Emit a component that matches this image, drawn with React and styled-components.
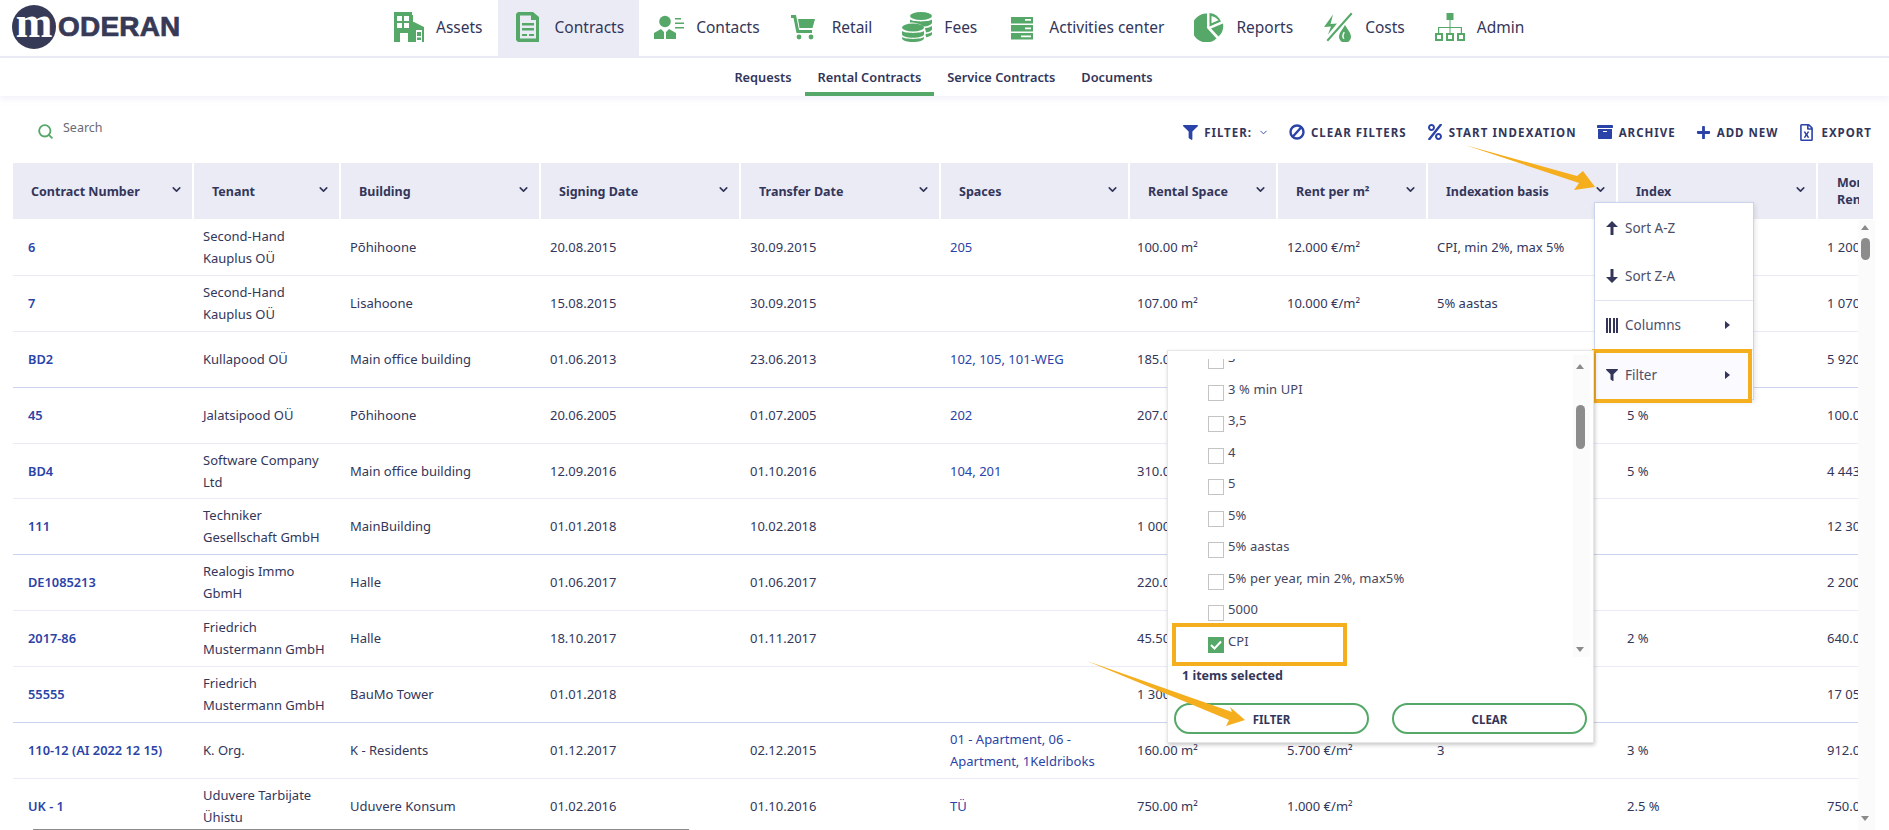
import React from "react";
import styled, { createGlobalStyle } from "styled-components";
import {
  FaArchive,
  FaFilter,
  FaPercent,
  FaPlus,
  FaRegFileExcel,
} from "react-icons/fa";
import { FiChevronDown, FiSearch } from "react-icons/fi";

const GREEN = "#55a868";
const INK = "#33365a";
const BLUE = "#2b43a8";
const ORANGE = "#f5ae1e";
const COLUMNS = "179px 145px 198px 198px 198px 187px 146px 148px 188px 198px 200px";

const GlobalStyle = createGlobalStyle`
  html, body {
    margin: 0;
    height: 830px;
    overflow: hidden;
    background: #fff;
    font-family: "Noto Sans", "Open Sans", sans-serif;
    color: ${INK};
  }
  * { box-sizing: border-box; }
`;

const Page = styled.div`
  position: relative;
  width: 1889px;
  height: 830px;
  overflow: hidden;
`;

const Header = styled.header`
  display: flex;
  height: 58px;
  padding-left: 12px;
  border-bottom: 2px solid #ebebf5;
`;

const Logo = styled.div`
  display: flex;
  align-items: center;
  width: 367px;
  height: 54px;
`;

const LogoMark = styled.div`
  display: flex;
  align-items: center;
  justify-content: center;
  width: 44px;
  height: 44px;
  border-radius: 50%;
  background: #373a56;
  color: #fff;
  font-family: "Liberation Serif", serif;
  font-size: 44px;
  font-weight: 700;
  line-height: 36px;
  padding-bottom: 8px;
`;

const LogoWord = styled.span`
  margin-left: 2px;
  font-family: "Liberation Sans", sans-serif;
  font-size: 28px;
  font-weight: 700;
  letter-spacing: 0.2px;
  color: #373a56;
  -webkit-text-stroke: 0.7px #373a56;
`;

const Nav = styled.nav`
  display: flex;
`;

const NavItem = styled.a`
  display: flex;
  align-items: center;
  gap: 12px;
  height: 56px;
  padding: 0 15px 2px;
  font-size: 15.5px;
  background: ${(p) => (p.$active ? "#ebebf5" : "transparent")};
`;

const NavIcon = styled.svg`
  width: 30px;
  height: 30px;
  fill: ${GREEN};
  flex: none;
`;

const SubNav = styled.div`
  display: flex;
  justify-content: center;
  height: 38px;
  padding-right: 2px;
  box-shadow: 0 3px 6px rgba(200, 200, 235, 0.25);
`;

const SubNavItem = styled.a`
  display: flex;
  align-items: center;
  height: 38px;
  padding: 4px 13px 0;
  font-size: 12.8px;
  font-weight: 600;
  border-bottom: 4px solid ${(p) => (p.$active ? GREEN : "transparent")};
`;

const ActionBar = styled.div`
  display: flex;
  justify-content: space-between;
  height: 67px;
  padding: 24px 17px 0 37px;
`;

const Search = styled.div`
  display: flex;
  gap: 9px;
  padding-top: 1px;
  font-size: 12.5px;
  color: #6a6a72;
  line-height: 14px;
  svg {
    margin-top: 2px;
    color: ${GREEN};
    font-size: 17px;
    stroke-width: 2.6;
  }
`;

const Actions = styled.div`
  display: flex;
  gap: 20px;
  height: 22px;
  margin-top: 1px;
`;

const Action = styled.a`
  display: flex;
  align-items: center;
  gap: 6px;
  font-size: 11.5px;
  font-weight: 700;
  letter-spacing: ${(p) => p.$tracking || 1}px;
  white-space: nowrap;
  svg {
    color: ${BLUE};
    font-size: ${(p) => p.$size || 16}px;
    flex: none;
  }
`;

const SmallChevron = styled(FiChevronDown)`
  && {
    font-size: 11px;
  }
`;

const HeadRow = styled.div`
  display: grid;
  grid-template-columns: ${COLUMNS};
  gap: 2px;
  width: 1860px;
  height: 56px;
  margin: 0 0 1px 13px;
  overflow: hidden;
`;

const HeadCell = styled.div`
  display: flex;
  align-items: center;
  justify-content: space-between;
  height: 56px;
  padding: 0 9px 0 18px;
  background: #ebebf5;
  font-size: 12.5px;
  font-weight: 700;
  line-height: 17px;
  svg {
    flex: none;
    font-size: 13px;
    stroke-width: 3;
    margin-bottom: 3px;
  }
`;

const ClippedTitle = styled.span`
  display: block;
  width: 22px;
  margin-left: 1px;
  overflow: hidden;
  white-space: nowrap;
`;

const Row = styled.div`
  display: grid;
  grid-template-columns: ${COLUMNS};
  gap: 2px;
  width: 1845px;
  height: 55.9px;
  margin-left: 13px;
  overflow: hidden;
  border-bottom: 1px solid ${(p) => (p.$strong ? "#ccd3ec" : "#ebebf8")};
`;

const Cell = styled.div`
  display: flex;
  align-items: center;
  padding: 0 ${(p) => p.$padRight || 9}px 1px ${(p) => p.$padLeft || 9}px;
  font-size: 13px;
  line-height: 22px;
  white-space: ${(p) => (p.$nowrap ? "nowrap" : "normal")};
  color: ${(p) => (p.$link ? BLUE : INK)};
`;

const KeyCell = styled(Cell)`
  padding-left: 15px;
  font-size: 12.8px;
  font-weight: 600;
  white-space: nowrap;
`;

const VScroll = styled.div`
  position: absolute;
  left: 1858px;
  top: 220px;
  width: 17px;
  height: 610px;
  background: #fbfbfb;
`;

const ScrollArrow = styled.i`
  position: absolute;
  left: ${(p) => p.$left ?? 3}px;
  ${(p) => (p.$down ? `bottom: ${p.$offset}px;` : `top: ${p.$offset}px;`)}
  width: 0;
  height: 0;
  border-left: 4.5px solid transparent;
  border-right: 4.5px solid transparent;
  ${(p) => (p.$down ? "border-top: 5px solid #8a8a8a;" : "border-bottom: 5px solid #8a8a8a;")}
`;

const ScrollThumb = styled.i`
  position: absolute;
  left: ${(p) => p.$left}px;
  top: ${(p) => p.$top}px;
  width: 9px;
  height: ${(p) => p.$height}px;
  border-radius: 5px;
  background: #8c8c8c;
`;

const HScroll = styled.div`
  position: absolute;
  left: 33px;
  bottom: 0;
  width: 656px;
  height: 1.5px;
  background: #8c8c8c;
`;

const Menu = styled.div`
  position: absolute;
  left: 1594px;
  top: 202px;
  width: 160px;
  height: 198px;
  background: #fff;
  border: 1px solid #ccd3ec;
  box-shadow: 1px 2px 5px rgba(0, 0, 0, 0.12);
`;

const MenuItem = styled.div`
  display: flex;
  align-items: center;
  height: 49px;
  padding: 0 23px 0 11px;
  font-size: 13.5px;
  gap: 7px;
  background: ${(p) => (p.$hover ? "#fafaff" : "transparent")};
  border-bottom: ${(p) => (p.$rule ? "1px solid #dfe3f2" : "none")};
  span {
    flex: 1;
    color: #4d4f6a;
  }
  svg {
    flex: none;
    width: 12px;
    color: ${INK};
  }
`;

const Caret = styled.i`
  flex: none;
  width: 0;
  height: 0;
  border-top: 4px solid transparent;
  border-bottom: 4px solid transparent;
  border-left: 5px solid ${INK};
`;

const ColumnsGlyph = styled.i`
  flex: none;
  width: 12px;
  height: 15px;
  background: repeating-linear-gradient(90deg, ${INK} 0 2px, transparent 2px 3.300px);
`;

const Callout = styled.div`
  position: absolute;
  left: ${(p) => p.$left}px;
  top: ${(p) => p.$top}px;
  width: ${(p) => p.$width}px;
  height: ${(p) => p.$height}px;
  border: 4px solid ${ORANGE};
`;

const FilterPopup = styled.div`
  position: absolute;
  left: 1167px;
  top: 350px;
  width: 427px;
  height: 393px;
  padding-top: 8px;
  background: #fff;
  border: 1px solid #e6e6e6;
  box-shadow: 1px 2px 4px rgba(0, 0, 0, 0.22);
`;

const OptionList = styled.div`
  height: 299px;
  overflow: hidden;
`;

const Options = styled.div`
  margin-top: -14px;
  padding-left: 40px;
`;

const Option = styled.label`
  display: flex;
  align-items: flex-start;
  gap: 4px;
  height: 31.5px;
  padding-top: 8px;
  font-size: 13px;
  letter-spacing: 0.1px;
  line-height: 16px;
  color: #44465f;
  span {
    margin-top: -4px;
  }
`;

const Box = styled.i`
  display: flex;
  align-items: center;
  justify-content: center;
  flex: none;
  width: 16px;
  height: 16px;
  background: ${(p) => (p.$on ? GREEN : "#fff")};
  border: 1px solid ${(p) => (p.$on ? GREEN : "#c4c4c4")};
`;

const ListScroll = styled.div`
  position: absolute;
  left: 405px;
  top: 4px;
  width: 17px;
  height: 302px;
  background: #fbfbfb;
`;

const Selected = styled.div`
  margin: 7px 0 0 14px;
  font-size: 12.5px;
  font-weight: 700;
  line-height: 22px;
`;

const PopupButtons = styled.div`
  display: flex;
  justify-content: space-between;
  margin-top: 16px;
  padding: 0 6px;
`;

const PillButton = styled.button`
  width: 195px;
  height: 31px;
  padding-top: 2px;
  background: #fff;
  border: 2px solid ${GREEN};
  border-radius: 16px;
  font-family: inherit;
  font-size: 11.5px;
  font-weight: 700;
  color: ${INK};
`;

const Arrow = styled.svg`
  position: absolute;
  left: 0;
  top: 0;
  width: 1889px;
  height: 830px;
  pointer-events: none;
`;

const navItems = [
  {
    label: "Assets",
    icon: (
      <path
        fillRule="evenodd"
        d="M0 0h18v3h1v7h1l10 5v15H0zM3 4v5h5V4zM10 4v5h5V4zM3 11v5h5v-5zM10 11v5h5v-5zM6 21v9h8v-9zM22 18v12h6V18zM23 20h4v4h-4zM23 25.500h4V28h-4z"
      />
    ),
  },
  {
    label: "Contracts",
    active: true,
    icon: (
      <path
        fillRule="evenodd"
        d="M5 0h15l6 5v25H5l-2-2V2zM7 3.500v23h16V8h-5V3.500zM9 11h12v2.500H9zM9 16h12v2.500H9zM9 22h5v2H9zM16 22h5v2h-5z"
      />
    ),
  },
  {
    label: "Contacts",
    icon: (
      <>
        <circle cx="11" cy="9.500" r="5.800" />
        <path d="M0 27v-6l7-4 3 3v7zM12 27v-7l3-3 7 4v6z" />
        <path d="M21 6h6v1.400h-6zM21 10.500h9v1.400h-9zM21 15h9v1.400h-9z" />
      </>
    ),
  },
  {
    label: "Retail",
    icon: (
      <>
        <path d="M1 3h5l3 15h13v3H6.500L3.500 6H1z" />
        <path d="M8 7h17l-2.500 9H9.500z" />
        <circle cx="9" cy="25" r="2.400" />
        <circle cx="21" cy="25" r="2.400" />
      </>
    ),
  },
  {
    label: "Fees",
    icon: (
      <>
        <ellipse cx="19" cy="4" rx="11" ry="4" />
        <path d="M8 7.500c3 2.500 19 2.500 22 0v3c0 2.500-5 4-9 4-1-2-7-4-13-4zM23 16c3 0 5-1 7-2v3c0 2-3 3-6 3.500zM23.500 22c3-.3 5-1 6.500-2v2.500c-1 1.500-3 2.300-6 2.700z" />
        <ellipse cx="11" cy="15.500" rx="11" ry="4" />
        <path d="M0 19c3 2.500 19 2.500 22 0v3c0 5-22 5-22 0zM0 25c3 2.500 19 2.500 22 0v1c0 5.300-22 5.300-22 0z" />
      </>
    ),
  },
  {
    label: "Activities center",
    icon: (
      <path
        fillRule="evenodd"
        d="M4 5h22v6.500H4zM18 7v1.800h6V7zM4 13h22v6.500H4zM18 15.500v1.800h6v-1.800zM4 21h22v6.500H4zM14 23.500v1.800h10v-1.800z"
      />
    ),
  },
  {
    label: "Reports",
    icon: (
      <>
        <path d="M13 1.500V16l9.500 10.500A14.500 14.500 0 1 1 13 1.500z" />
        <path fillRule="evenodd" d="M15.500 1a14 14 0 0 1 11.500 8.500L15.500 14.500zM17.500 4v7.300l7-3a11.500 11.500 0 0 0-7-4.300z" />
        <path d="M17 16.500l12-5a14.500 14.500 0 0 1-4.500 13z" />
      </>
    ),
  },
  {
    label: "Costs",
    icon: (
      <>
        <path d="M10 2.500L1 15l7-.5-3 8 9-11-6.500.5zM28 .5l1.500 1.500L5 29.500l-1.500-1.500z" />
        <path d="M22 13c3 5 6 8 6 12a6 5.500 0 0 1-12 0c0-4 3-7 6-12zM20.500 20c-1.500 3-2 5 0 7l1-.5c-1.500-2-1-4 .5-6z" />
      </>
    ),
  },
  {
    label: "Admin",
    icon: (
      <>
        <path d="M11.500 1h7v7h-7z" />
        <path d="M14.500 8h1v7H27v6h-1.200v-5H15.500v5h-1v-5H4.200v5H3v-6h11.500z" />
        <path
          fillRule="evenodd"
          d="M0 21h8v8H0zM2 23v4h4v-4zM11 21h8v8h-8zM13 23v4h4v-4zM22 21h8v8h-8zM24 23v4h4v-4z"
        />
      </>
    ),
  },
];

const subNav = ["Requests", "Rental Contracts", "Service Contracts", "Documents"];

const headings = [
  "Contract Number",
  "Tenant",
  "Building",
  "Signing Date",
  "Transfer Date",
  "Spaces",
  "Rental Space",
  "Rent per m²",
  "Indexation basis",
  "Index",
];

const rows = [
  ["6", "Second-Hand Kauplus OÜ", "Põhihoone", "20.08.2015", "30.09.2015", "205", "100.00 m²", "12.000 €/m²", "CPI, min 2%, max 5%", "", "1 200.00 €"],
  ["7", "Second-Hand Kauplus OÜ", "Lisahoone", "15.08.2015", "30.09.2015", "", "107.00 m²", "10.000 €/m²", "5% aastas", "", "1 070.00 €"],
  ["BD2", "Kullapood OÜ", "Main office building", "01.06.2013", "23.06.2013", "102, 105, 101-WEG", "185.00 m²", "", "", "", "5 920.00 €"],
  ["45", "Jalatsipood OÜ", "Põhihoone", "20.06.2005", "01.07.2005", "202", "207.00 m²", "", "", "5 %", "100.00 €"],
  ["BD4", "Software Company Ltd", "Main office building", "12.09.2016", "01.10.2016", "104, 201", "310.00 m²", "", "", "5 %", "4 443.00 €"],
  ["111", "Techniker Gesellschaft GmbH", "MainBuilding", "01.01.2018", "10.02.2018", "", "1 000.00 m²", "", "", "", "12 300.00 €"],
  ["DE1085213", "Realogis Immo GbmH", "Halle", "01.06.2017", "01.06.2017", "", "220.00 m²", "", "", "", "2 200.00 €"],
  ["2017-86", "Friedrich Mustermann GmbH", "Halle", "18.10.2017", "01.11.2017", "", "45.50 m²", "", "", "2 %", "640.00 €"],
  ["55555", "Friedrich Mustermann GmbH", "BauMo Tower", "01.01.2018", "", "", "1 300.00 m²", "", "", "", "17 050.00 €"],
  ["110-12 (AI 2022 12 15)", "K. Org.", "K - Residents", "01.12.2017", "02.12.2015", "01 - Apartment, 06 - Apartment, 1Keldriboks", "160.00 m²", "5.700 €/m²", "3", "3 %", "912.00 €"],
  ["UK - 1", "Uduvere Tarbijate Ühistu", "Uduvere Konsum", "01.02.2016", "01.10.2016", "TÜ", "750.00 m²", "1.000 €/m²", "", "2.5 %", "750.00 €"],
];

const options = ["3", "3 % min UPI", "3,5", "4", "5", "5%", "5% aastas", "5% per year, min 2%, max5%", "5000"];

const ClearIcon = () => (
  <svg width="16" height="16" viewBox="0 0 16 16" fill="none" stroke="currentColor" strokeWidth="2.400">
    <circle cx="8" cy="8" r="6.500" />
    <path d="M12.500 3L3.500 13" />
  </svg>
);

const SortIcon = ({ down }) => (
  <svg viewBox="0 0 12 14" height="14" fill="currentColor">
    <path d={down ? "M4.500 0h3v8H12l-6 6-6-6h4.500z" : "M4.500 14h3V6H12L6 0 0 6h4.500z"} />
  </svg>
);

const App = () => (
  <Page>
    <GlobalStyle />
    <Header>
      <Logo>
        <LogoMark>m</LogoMark>
        <LogoWord>ODERAN</LogoWord>
      </Logo>
      <Nav>
        {navItems.map((item) => (
          <NavItem key={item.label} $active={item.active}>
            <NavIcon viewBox="0 0 30 30">{item.icon}</NavIcon>
            {item.label}
          </NavItem>
        ))}
      </Nav>
    </Header>
    <SubNav>
      {subNav.map((label) => (
        <SubNavItem key={label} $active={label === "Rental Contracts"}>
          {label}
        </SubNavItem>
      ))}
    </SubNav>
    <ActionBar>
      <Search>
        <FiSearch />
        Search
      </Search>
      <Actions>
        <Action $size={15}>
          <FaFilter />
          FILTER: <SmallChevron />
        </Action>
        <Action>
          <ClearIcon />
          CLEAR FILTERS
        </Action>
        <Action $tracking={1.1}>
          <FaPercent />
          START INDEXATION
        </Action>
        <Action>
          <FaArchive />
          ARCHIVE
        </Action>
        <Action $size={15}>
          <FaPlus />
          ADD NEW
        </Action>
        <Action $size={17}>
          <FaRegFileExcel />
          EXPORT
        </Action>
      </Actions>
    </ActionBar>
    <HeadRow>
      {headings.map((title) => (
        <HeadCell key={title}>
          {title}
          <FiChevronDown />
        </HeadCell>
      ))}
      <HeadCell>
        <ClippedTitle>
          Monthly
          <br />
          Rent
        </ClippedTitle>
      </HeadCell>
    </HeadRow>
    {rows.map((row, r) => (
      <Row key={r} $strong={r % 3 === 2}>
        <KeyCell $link>{row[0]}</KeyCell>
        <Cell $padRight={12}>{row[1]}</Cell>
        <Cell>{row[2]}</Cell>
        <Cell>{row[3]}</Cell>
        <Cell>{row[4]}</Cell>
        <Cell $link>{row[5]}</Cell>
        <Cell $nowrap $padLeft={7}>{row[6]}</Cell>
        <Cell $nowrap>{row[7]}</Cell>
        <Cell $nowrap>{row[8]}</Cell>
        <Cell $nowrap>{row[9]}</Cell>
        <Cell $nowrap>{row[10]}</Cell>
      </Row>
    ))}
    <VScroll>
      <ScrollArrow $offset={5} />
      <ScrollThumb $left={3} $top={18} $height={22} />
      <ScrollArrow $down $offset={9} />
    </VScroll>
    <HScroll />
    <Menu>
      <MenuItem>
        <SortIcon />
        <span>Sort A-Z</span>
      </MenuItem>
      <MenuItem $rule>
        <SortIcon down />
        <span>Sort Z-A</span>
      </MenuItem>
      <MenuItem $rule>
        <ColumnsGlyph />
        <span>Columns</span>
        <Caret />
      </MenuItem>
      <MenuItem $hover>
        <FaFilter size={14} />
        <span>Filter</span>
        <Caret />
      </MenuItem>
      <Callout $left={-3} $top={146} $width={160} $height={54} />
    </Menu>
    <FilterPopup>
      <OptionList>
        <Options>
          {options.map((label) => (
            <Option key={label}>
              <Box />
              <span>{label}</span>
            </Option>
          ))}
          <Option>
            <Box $on>
              <svg width="12" height="10" viewBox="0 0 12 10">
                <path d="M1 5l3.500 3.500L11 1.500" fill="none" stroke="#fff" strokeWidth="2" />
              </svg>
            </Box>
            <span>CPI</span>
          </Option>
        </Options>
      </OptionList>
      <ListScroll>
        <ScrollArrow $left={3} $offset={9} />
        <ScrollThumb $left={3} $top={50} $height={44} />
        <ScrollArrow $left={3} $down $offset={5} />
      </ListScroll>
      <Selected>1 items selected</Selected>
      <PopupButtons>
        <PillButton>FILTER</PillButton>
        <PillButton>CLEAR</PillButton>
      </PopupButtons>
      <Callout $left={4} $top={272} $width={175} $height={43} />
    </FilterPopup>
    <Arrow viewBox="0 0 1889 830">
      <polygon fill={ORANGE} points="1465,145 1577,176 1583,171 1595,187 1574,190 1579,183" />
      <polygon fill={ORANGE} points="1087,661 1232,712 1230,707 1245,720 1226,726 1229,720" />
    </Arrow>
  </Page>
);

export default App;
